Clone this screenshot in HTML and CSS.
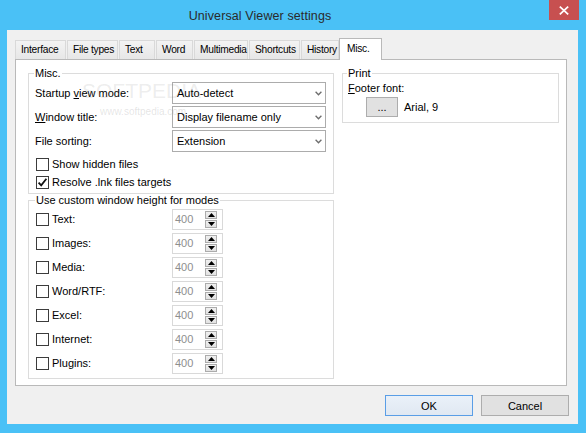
FILE: index.html
```html
<!DOCTYPE html>
<html>
<head>
<meta charset="utf-8">
<link rel="stylesheet" href="styles.css">
</head>
<body>
<div class="window">
  <div class="titlebar">
    <span class="title">Universal Viewer settings</span>
    <div class="close">
      <svg width="10" height="9" viewBox="0 0 10 9"><path d="M0.8 0.6 L9.2 8.4 M9.2 0.6 L0.8 8.4" stroke="#fff" stroke-width="1.7" fill="none"/></svg>
    </div>
  </div>
  <div class="client">
    <div class="tabs">
      <div class="tab t-interface">Interface</div>
      <div class="tab t-filetypes">File types</div>
      <div class="tab t-text">Text</div>
      <div class="tab t-word">Word</div>
      <div class="tab t-multimedia">Multimedia</div>
      <div class="tab t-shortcuts">Shortcuts</div>
      <div class="tab t-history">History</div>
      <div class="tab active t-misc">Misc.</div>
    </div>
    <div class="pane">
      <div class="watermark">
        <span class="wm-big">SOFTPEDIA</span>
        <span class="wm-small">www.softpedia.com</span>
      </div>
      <div class="col left">
        <div class="group misc">
          <span class="legend">Misc.</span>
          <div class="fields">
            <div class="field">
              <span class="flabel">Startup <u>v</u>iew mode:</span>
              <div class="combo"><span>Auto-detect</span><svg class="chev" width="7" height="5" viewBox="0 0 7 5"><path d="M0.6 0.8 L3.5 3.8 L6.4 0.8" stroke="#6d6d6d" stroke-width="1.3" fill="none"/></svg></div>
            </div>
            <div class="field">
              <span class="flabel"><u>W</u>indow title:</span>
              <div class="combo"><span>Display filename only</span><svg class="chev" width="7" height="5" viewBox="0 0 7 5"><path d="M0.6 0.8 L3.5 3.8 L6.4 0.8" stroke="#6d6d6d" stroke-width="1.3" fill="none"/></svg></div>
            </div>
            <div class="field">
              <span class="flabel">File sorting:</span>
              <div class="combo"><span>Extension</span><svg class="chev" width="7" height="5" viewBox="0 0 7 5"><path d="M0.6 0.8 L3.5 3.8 L6.4 0.8" stroke="#6d6d6d" stroke-width="1.3" fill="none"/></svg></div>
            </div>
          </div>
          <div class="checks">
            <div class="check"><span class="box"></span><span>Show hidden files</span></div>
            <div class="check"><span class="box"><svg width="11" height="11" viewBox="0 0 11 11"><path d="M1.6 5.6 L4.2 8.4 L9.4 1.8" stroke="#111" stroke-width="1.8" fill="none"/></svg></span><span>Resolve .lnk files targets</span></div>
          </div>
        </div>
        <div class="group modes">
          <span class="legend">Use custom window height for modes</span>
          <div class="mode"><span class="box"></span><span class="mlabel">Text:</span><div class="spinner"><span>400</span><div class="spin"><span><svg width="7" height="4" viewBox="0 0 7 4"><path d="M0 4 L3.5 0 L7 4 Z" fill="#000"/></svg></span><span><svg width="7" height="4" viewBox="0 0 7 4"><path d="M0 0 L3.5 4 L7 0 Z" fill="#000"/></svg></span></div></div></div>
          <div class="mode"><span class="box"></span><span class="mlabel">Images:</span><div class="spinner"><span>400</span><div class="spin"><span><svg width="7" height="4" viewBox="0 0 7 4"><path d="M0 4 L3.5 0 L7 4 Z" fill="#000"/></svg></span><span><svg width="7" height="4" viewBox="0 0 7 4"><path d="M0 0 L3.5 4 L7 0 Z" fill="#000"/></svg></span></div></div></div>
          <div class="mode"><span class="box"></span><span class="mlabel">Media:</span><div class="spinner"><span>400</span><div class="spin"><span><svg width="7" height="4" viewBox="0 0 7 4"><path d="M0 4 L3.5 0 L7 4 Z" fill="#000"/></svg></span><span><svg width="7" height="4" viewBox="0 0 7 4"><path d="M0 0 L3.5 4 L7 0 Z" fill="#000"/></svg></span></div></div></div>
          <div class="mode"><span class="box"></span><span class="mlabel">Word/RTF:</span><div class="spinner"><span>400</span><div class="spin"><span><svg width="7" height="4" viewBox="0 0 7 4"><path d="M0 4 L3.5 0 L7 4 Z" fill="#000"/></svg></span><span><svg width="7" height="4" viewBox="0 0 7 4"><path d="M0 0 L3.5 4 L7 0 Z" fill="#000"/></svg></span></div></div></div>
          <div class="mode"><span class="box"></span><span class="mlabel">Excel:</span><div class="spinner"><span>400</span><div class="spin"><span><svg width="7" height="4" viewBox="0 0 7 4"><path d="M0 4 L3.5 0 L7 4 Z" fill="#000"/></svg></span><span><svg width="7" height="4" viewBox="0 0 7 4"><path d="M0 0 L3.5 4 L7 0 Z" fill="#000"/></svg></span></div></div></div>
          <div class="mode"><span class="box"></span><span class="mlabel">Internet:</span><div class="spinner"><span>400</span><div class="spin"><span><svg width="7" height="4" viewBox="0 0 7 4"><path d="M0 4 L3.5 0 L7 4 Z" fill="#000"/></svg></span><span><svg width="7" height="4" viewBox="0 0 7 4"><path d="M0 0 L3.5 4 L7 0 Z" fill="#000"/></svg></span></div></div></div>
          <div class="mode"><span class="box"></span><span class="mlabel">Plugins:</span><div class="spinner"><span>400</span><div class="spin"><span><svg width="7" height="4" viewBox="0 0 7 4"><path d="M0 4 L3.5 0 L7 4 Z" fill="#000"/></svg></span><span><svg width="7" height="4" viewBox="0 0 7 4"><path d="M0 0 L3.5 4 L7 0 Z" fill="#000"/></svg></span></div></div></div>
        </div>
      </div>
      <div class="col right">
        <div class="group print">
          <span class="legend">Print</span>
          <div class="footer-label"><u>F</u>ooter font:</div>
          <div class="font-row">
            <button class="dots-btn">...</button>
            <span class="font-name">Arial, 9</span>
          </div>
        </div>
      </div>
    </div>
    <div class="buttons">
      <button class="btn default">OK</button>
      <button class="btn">Cancel</button>
    </div>
  </div>
</div>
</body>
</html>
```

FILE: styles.css
```css
html, body {
  margin: 0;
  padding: 0;
}
body {
  width: 586px;
  height: 433px;
  overflow: hidden;
  font-family: "Liberation Sans", Arial, sans-serif;
  font-size: 11px;
  color: #000;
}
.window {
  width: 586px;
  height: 433px;
  background: #4ac1f6;
  display: flex;
  flex-direction: column;
  position: relative;
}
.titlebar {
  height: 30px;
  flex: none;
  display: flex;
  align-items: center;
  justify-content: center;
  padding-right: 66px;
  padding-top: 1px;
  box-sizing: border-box;
}
.title {
  font-size: 12.5px;
  color: #2a2a2a;
  letter-spacing: 0.1px;
}
.close {
  position: absolute;
  top: 0;
  right: 7px;
  width: 30px;
  height: 20px;
  background: #c75050;
  display: flex;
  align-items: center;
  justify-content: center;
}
.close svg { display: block; }
.client {
  margin: 0 8px 9px 7px;
  height: 394px;
  background: #f0f0f0;
  display: flex;
  flex-direction: column;
}
.tabs {
  height: 30px;
  box-sizing: border-box;
  padding: 8px 0 0 8px;
  display: flex;
  align-items: flex-end;
  gap: 1px;
  margin-bottom: -1px;
  position: relative;
  z-index: 1;
}
.tab {
  box-sizing: border-box;
  height: 19px;
  margin-bottom: 1px;
  border: 1px solid #d9d9d9;
  border-bottom: none;
  background: linear-gradient(#f3f3f3, #e7e7e7);
  padding-left: 5px;
  line-height: 18px;
  font-size: 10.2px;
  letter-spacing: -0.25px;
  white-space: nowrap;
}
.tab.active {
  height: 22px;
  margin-bottom: 0;
  margin-left: -1px;
  background: #fff;
  border-color: #b9b9b9;
  padding-left: 7px;
  line-height: 19px;
}
.t-interface { width: 51px; }
.t-filetypes { width: 51px; }
.t-text { width: 36px; }
.t-word { width: 37px; }
.t-multimedia { width: 54px; }
.t-shortcuts { width: 51px; }
.t-history { width: 38px; }
.t-misc { width: 43px; }

.pane {
  margin-left: 8px;
  width: 552px;
  height: 327px;
  box-sizing: border-box;
  border: 1px solid #b9b9b9;
  background: #fff;
  padding: 13px 0 0 12px;
  display: flex;
  align-items: flex-start;
  gap: 8px;
  position: relative;
}
.watermark {
  position: absolute;
  left: 66px;
  top: 19px;
  display: flex;
  flex-direction: column;
  pointer-events: none;
  z-index: 2;
}
.wm-big {
  font-size: 21px;
  color: rgba(120, 120, 120, 0.14);
  line-height: 24px;
}
.wm-small {
  font-size: 10px;
  color: rgba(120, 120, 120, 0.2);
  margin-left: 18px;
  margin-top: 3px;
  line-height: 12px;
}
.col {
  display: flex;
  flex-direction: column;
}
.col.left {
  width: 306px;
  gap: 6px;
}
.col.right {
  width: 217px;
}
.group {
  border: 1px solid #dcdcdc;
  box-sizing: border-box;
  display: flex;
  flex-direction: column;
}
.legend {
  align-self: flex-start;
  background: #fff;
  padding: 0 1px;
  margin: -7px 0 0 5px;
  height: 13px;
  line-height: 13px;
  white-space: nowrap;
}
.modes .legend { margin-left: 6px; }
.print .legend { margin-left: 4px; }

.fields {
  display: flex;
  flex-direction: column;
  gap: 2px;
  margin-top: 2px;
  padding: 0 7px 0 6px;
}
.field {
  display: flex;
  align-items: center;
  height: 22px;
}
.flabel {
  width: 137px;
  flex: none;
}
.combo {
  width: 154px;
  height: 22px;
  box-sizing: border-box;
  border: 1px solid #acacac;
  background: #fff;
  display: flex;
  align-items: center;
  justify-content: space-between;
  padding: 0 3px 0 4px;
}
.chev { display: block; }

.checks {
  margin-top: 3px;
  padding: 0 0 2px 7px;
  display: flex;
  flex-direction: column;
}
.check {
  display: flex;
  align-items: center;
  height: 18px;
}
.box {
  width: 13px;
  height: 13px;
  flex: none;
  box-sizing: border-box;
  border: 1px solid #3c3c3c;
  background: #fff;
  margin-right: 3px;
  display: flex;
  align-items: center;
  justify-content: center;
}
.box svg { display: block; }

.modes {
  padding-bottom: 3px;
}
.mode {
  display: flex;
  align-items: center;
  height: 24px;
  padding-left: 7px;
}
.mlabel {
  width: 120px;
  flex: none;
}
.spinner {
  width: 51px;
  height: 21px;
  box-sizing: border-box;
  border: 1px solid #d9d9d9;
  background: #fff;
  color: #8e8e8e;
  display: flex;
  align-items: center;
  justify-content: space-between;
  padding: 0 5px 0 2px;
}
.spin {
  display: flex;
  flex-direction: column;
  gap: 1px;
}
.spin span {
  width: 12px;
  height: 8px;
  box-sizing: border-box;
  border: 1px solid #acacac;
  background: linear-gradient(#f0f0f0, #e2e2e2);
  display: flex;
  align-items: center;
  justify-content: center;
}
.spin svg { display: block; }

.print {
  padding-bottom: 5px;
}
.footer-label {
  padding-left: 5px;
  margin-top: 1px;
  line-height: 14px;
}
.font-row {
  display: flex;
  align-items: center;
  margin-top: 2px;
  padding-left: 23px;
}
.dots-btn {
  width: 32px;
  height: 20px;
  box-sizing: border-box;
  border: 1px solid #adadad;
  background: #e1e1e1;
  font-family: inherit;
  font-size: 11px;
  color: #000;
  padding: 0;
  line-height: 16px;
}
.font-name {
  margin-left: 6px;
}

.buttons {
  display: flex;
  justify-content: flex-end;
  gap: 8px;
  padding-right: 9px;
  margin-top: 9px;
}
.btn {
  width: 88px;
  height: 21px;
  box-sizing: border-box;
  border: 1px solid #adadad;
  background: #e1e1e1;
  font-family: inherit;
  font-size: 11px;
  color: #000;
  padding: 0;
}
.btn.default {
  border-color: #5a9ee6;
  background: linear-gradient(#eaf1f9, #e0e8f2);
}
```
